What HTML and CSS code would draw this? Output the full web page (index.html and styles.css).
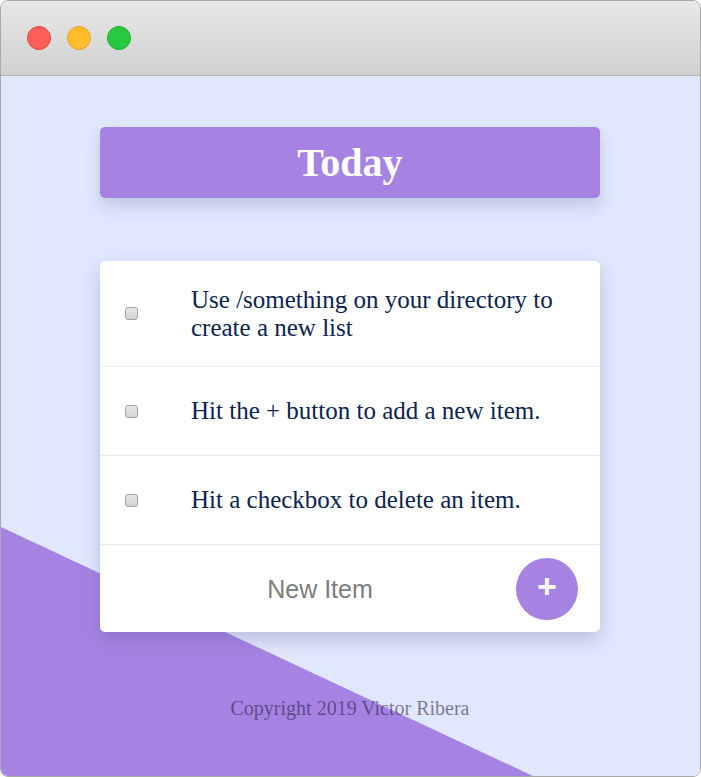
FILE: index.html
```html
<!DOCTYPE html>
<html>
<head>
<meta charset="utf-8">
<link rel="stylesheet" href="styles.css">
</head>
<body>
<div class="window">
  <div class="titlebar">
    <span class="dot red"></span>
    <span class="dot yellow"></span>
    <span class="dot green"></span>
  </div>
  <div class="content">
    <div class="slant"></div>
    <div class="heading"><h1>Today</h1></div>
    <div class="list">
      <div class="item tall">
        <input type="checkbox" class="check">
        <p class="text">Use /something on your directory to create a new list</p>
      </div>
      <div class="item">
        <input type="checkbox" class="check">
        <p class="text">Hit the + button to add a new item.</p>
      </div>
      <div class="item">
        <input type="checkbox" class="check">
        <p class="text">Hit a checkbox to delete an item.</p>
      </div>
      <div class="new-row">
        <input type="text" class="new-input" placeholder="New Item">
        <button class="add">+</button>
      </div>
    </div>
    <footer class="copy">Copyright 2019 Victor Ribera</footer>
  </div>
</div>
</body>
</html>
```

FILE: styles.css
```css
html, body {
  margin: 0;
  padding: 0;
  background: #ffffff;
}

.window {
  width: 701px;
  height: 777px;
  box-sizing: border-box;
  border: 1px solid #a9a9a9;
  border-radius: 8px;
  overflow: hidden;
  position: relative;
  display: flex;
  flex-direction: column;
}

.titlebar {
  height: 74px;
  flex: none;
  border-bottom: 1px solid #b3b3b3;
  background: linear-gradient(#e8e8e8, #d0d0d0);
  display: flex;
  align-items: center;
  gap: 16px;
  padding-left: 26px;
}

.dot {
  width: 22px;
  height: 22px;
  border-radius: 50%;
  border: 1px solid transparent;
}
.red { background: #ff5f57; border-color: #e3463f; }
.yellow { background: #ffbd2e; border-color: #e1a325; }
.green { background: #28c940; border-color: #1cae2c; }

.content {
  flex: 1;
  position: relative;
  background: #e1e7fc;
  display: flex;
  flex-direction: column;
  padding-left: 99px;
  padding-top: 51px;
}

.slant {
  position: absolute;
  left: 0;
  top: 0;
  width: 100%;
  height: 100%;
  background: #a683e2;
  clip-path: polygon(0 451px, 534px 701px, 0 701px);
}

.heading {
  position: relative;
  width: 500px;
  height: 71px;
  background: #a683e2;
  border-radius: 5px;
  box-shadow: 0 8px 16px rgba(80, 80, 140, 0.22);
  display: flex;
  align-items: center;
  justify-content: center;
}

.heading h1 {
  margin: 0;
  font-family: "Liberation Serif", serif;
  font-weight: bold;
  font-size: 40px;
  color: #ffffff;
  line-height: 1;
  padding-top: 1px;
}

.list {
  position: relative;
  margin-top: 63px;
  width: 500px;
  background: #ffffff;
  border-radius: 5px;
  box-shadow: 0 8px 18px rgba(80, 80, 140, 0.25);
}

.item {
  height: 88px;
  border-bottom: 1px solid #ececec;
  display: flex;
  align-items: center;
}
.item.tall {
  height: 105px;
}

.check {
  -webkit-appearance: none;
  appearance: none;
  box-sizing: border-box;
  margin: 0 0 0 25px;
  width: 13px;
  height: 13px;
  flex: none;
  border: 1px solid #a3a3a3;
  border-radius: 3px;
  background: linear-gradient(#e6e6e6, #d2d2d2);
}

.text {
  margin: 0 0 0 53px;
  width: 384px;
  font-family: "Liberation Serif", serif;
  font-size: 25px;
  line-height: 28px;
  color: #0b2350;
}

.new-row {
  height: 87px;
  display: flex;
  align-items: center;
}

.new-input {
  width: 440px;
  border: none;
  outline: none;
  background: transparent;
  text-align: center;
  font-family: "Liberation Sans", Arial, sans-serif;
  font-size: 25px;
  padding: 0;
  margin: 2px 0 0 0;
  color: #333;
}
.new-input::placeholder {
  color: #7d7d7d;
}

.add {
  margin-left: -24px;
  width: 62px;
  height: 62px;
  border-radius: 50%;
  border: none;
  background: #a683e2;
  color: #ffffff;
  font-family: "Liberation Sans", Arial, sans-serif;
  font-weight: bold;
  font-size: 34px;
  line-height: 1;
  padding: 0 0 6px 0;
  flex: none;
}

.copy {
  position: relative;
  width: 500px;
  margin-top: 65px;
  text-align: center;
  font-family: "Liberation Serif", serif;
  font-size: 20px;
  color: rgba(30, 20, 60, 0.55);
}
```
